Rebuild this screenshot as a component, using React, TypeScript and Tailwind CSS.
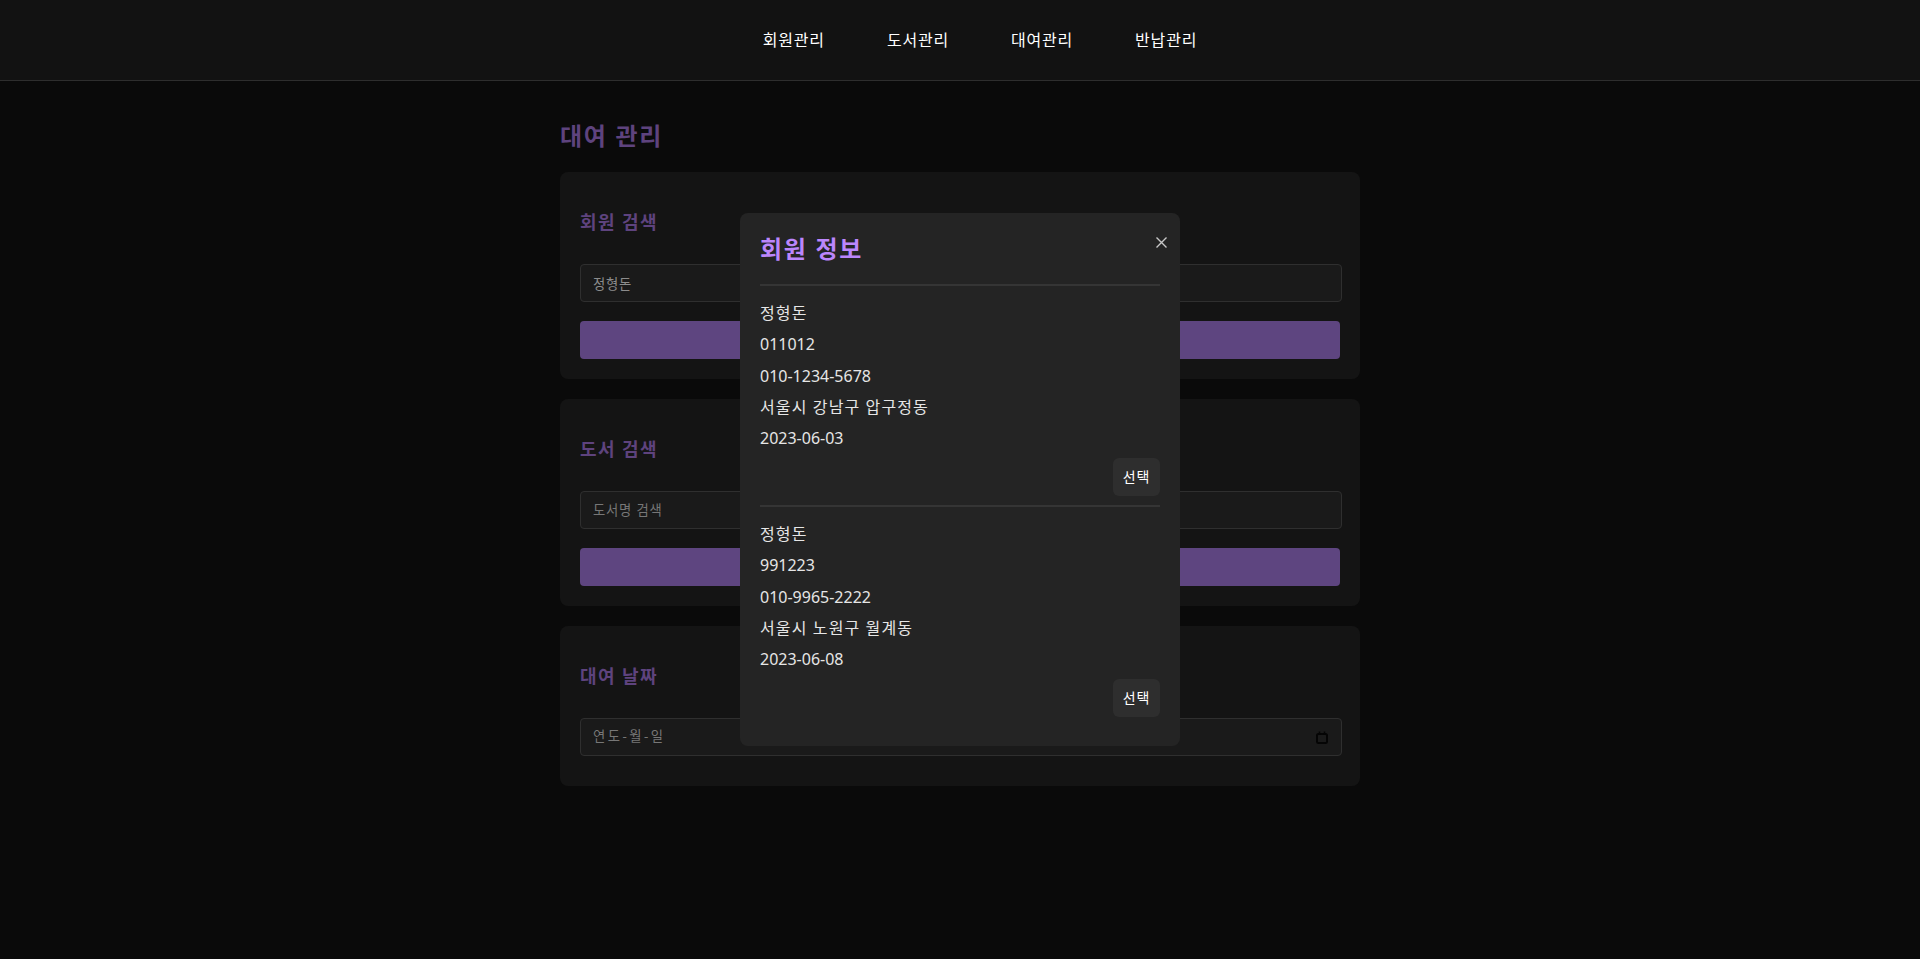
import { useState } from "react";

type Member = {
  id: number;
  name: string;
  birth: string;
  phone: string;
  address: string;
  joined: string;
};

const members: Member[] = [
  { id: 1, name: "정형돈", birth: "011012", phone: "010-1234-5678", address: "서울시 강남구 압구정동", joined: "2023-06-03" },
  { id: 2, name: "정형돈", birth: "991223", phone: "010-9965-2222", address: "서울시 노원구 월계동", joined: "2023-06-08" },
];

const menus = ["회원관리", "도서관리", "대여관리", "반납관리"];

function SearchCard({ title, value, placeholder }: { title: string; value?: string; placeholder: string }) {
  return (
    <section className="rounded-lg bg-[#141414] p-5">
      <h3 className="mt-[17px] h-[27px] text-lg leading-[27px] font-bold tracking-[0.08em] text-[#5e437e]">{title}</h3>
      <input
        readOnly
        value={value ?? ""}
        placeholder={placeholder}
        className="mt-[28px] box-border h-[38px] w-[762px] rounded border border-[#2f2f2f] bg-[#1a1a1a] px-3 text-[13.33px] tracking-[0.06em] text-[#8c8c8c] outline-none placeholder:text-[#777]"
      />
      <button className="mt-[19px] block h-[38px] w-full rounded bg-[#5e4580]" />
    </section>
  );
}

export default function App() {
  const [open, setOpen] = useState(true);

  return (
    <div className="min-h-screen bg-[#0a0a0a] font-['Noto_Sans','Noto_Sans_CJK_KR',sans-serif] text-white">
      <header className="flex h-[81px] items-center justify-center border-b border-[#2e2e2e] bg-[#121212] pl-10">
        <nav className="flex gap-[62px] text-base tracking-[0.05em]">
          {menus.map((m) => (
            <a key={m} className="cursor-pointer text-white">
              {m}
            </a>
          ))}
        </nav>
      </header>

      <main className="mx-auto w-[800px] pt-[39px]">
        <h2 className="mb-5 h-8 text-2xl leading-8 font-bold tracking-[0.07em] text-[#5e437e]">대여 관리</h2>
        <div className="flex flex-col gap-5">
          <SearchCard title="회원 검색" value="정형돈" placeholder="회원명 검색" />
          <SearchCard title="도서 검색" placeholder="도서명 검색" />
          <section className="rounded-lg bg-[#141414] px-5 pt-5 pb-[30px]">
            <h3 className="mt-[17px] h-[27px] text-lg leading-[27px] font-bold tracking-[0.08em] text-[#5e437e]">대여 날짜</h3>
            <div className="mt-[28px] box-border flex h-[38px] w-[762px] items-center justify-between rounded border border-[#2f2f2f] bg-[#1a1a1a] pr-[13px] pl-3 text-[13.33px] text-[#777]">
              <span className="tracking-[2.5px]">연도-월-일</span>
              <svg width="12" height="13" viewBox="0 0 12 13" fill="none">
                <rect x="1" y="3" width="10" height="9" rx="1.5" stroke="#050505" strokeWidth="2" />
                <path d="M3.5 0.5v3M8.5 0.5v3" stroke="#050505" strokeWidth="1.5" />
              </svg>
            </div>
          </section>
        </div>
      </main>

      {open && (
        <div className="fixed inset-0 flex items-center justify-center">
          <div className="relative w-[440px] rounded-lg bg-[#242424] p-5">
            <button
              onClick={() => setOpen(false)}
              className="absolute top-[24px] right-[13px] h-[11px] w-[11px]"
            >
              <svg width="11" height="11" viewBox="0 0 11 11">
                <path d="M0.5 0.5l10 10M10.5 0.5l-10 10" stroke="#c8c8c8" strokeWidth="1.4" />
              </svg>
            </button>
            <h2 className="mb-[19px] h-8 text-2xl leading-8 font-bold tracking-[0.07em] text-[#bb86fc]">회원 정보</h2>
            {members.map((m) => (
              <div key={m.id} className="flex flex-col border-t-2 border-[#353535] pt-[15px] pb-[9px]">
                <div className="flex flex-col gap-[7.25px] text-base leading-6 text-[#e6e6e6]">
                  <p className="tracking-[0.07em]">{m.name}</p>
                  <p>{m.birth}</p>
                  <p>{m.phone}</p>
                  <p className="tracking-[0.07em]">{m.address}</p>
                  <p>{m.joined}</p>
                </div>
                <button className="mt-[8px] h-[38px] self-end rounded-md bg-[#2e2e2e] px-[10px] text-sm tracking-[0.05em] text-white">
                  선택
                </button>
              </div>
            ))}
          </div>
        </div>
      )}
    </div>
  );
}
